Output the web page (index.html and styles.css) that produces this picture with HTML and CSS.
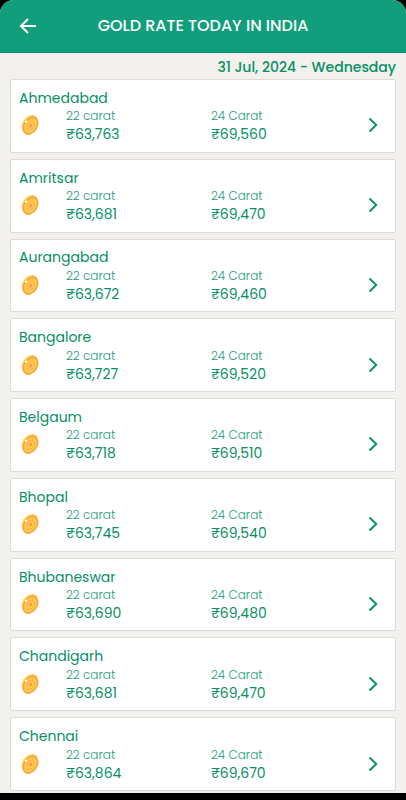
FILE: index.html
```html
<!DOCTYPE html>
<html lang="en">
<head>
<meta charset="utf-8">
<meta name="viewport" content="width=device-width, initial-scale=1">
<title>Gold Rate Today in India</title>
<link rel="stylesheet" href="styles.css">
</head>
<body>
<svg class="sprite" aria-hidden="true">
  <symbol id="coin" viewBox="0 0 20 22">
    <g transform="rotate(32 10 11)">
      <ellipse cx="9.300" cy="10.600" rx="7" ry="10" fill="#fec95a"/>
      <ellipse cx="10.900" cy="11.300" rx="7" ry="10" fill="#f9a536"/>
      <ellipse cx="10.800" cy="11.300" rx="5.500" ry="8.300" fill="#fec95a"/>
      <ellipse cx="10.900" cy="11.300" rx="3.300" ry="5" fill="none" stroke="#fbb040" stroke-width="1"/>
      <path d="M10.900 9.300v4M9.500 11.300h2.800" stroke="#f59a2c" stroke-width="1.500"/>
    </g>
    <circle cx="6" cy="7.600" r="1.200" fill="#fffaf0"/>
  </symbol>
  <symbol id="chevron" viewBox="0 0 10 16">
    <path d="M1.500 1.500 8.300 8l-6.800 6.500" fill="none" stroke="currentColor" stroke-width="1.800"/>
  </symbol>
</svg>
<div class="screen">
  <header class="bar">
    <button class="back" type="button" aria-label="Back">
      <svg viewBox="0 0 18 16" aria-hidden="true"><path d="M17 8H2M9 1 2 8l7 7" fill="none" stroke="currentColor" stroke-width="2"/></svg>
    </button>
    <h1 class="title">GOLD RATE TODAY IN INDIA</h1>
  </header>
  <main class="content">
    <p class="date">31 Jul, 2024 - Wednesday</p>
    <ul class="cities" id="cities"></ul>
  </main>
</div>
<script src="rates.js"></script>
</body>
</html>
```

FILE: styles.css
```css
* {
  box-sizing: border-box;
}

body {
  margin: 0;
  background: #000;
  color: #078f66;
  font-family: Poppins, Inter, sans-serif;
}

.sprite {
  display: none;
}

.screen {
  display: flex;
  flex-direction: column;
  min-height: 100vh;
  border-bottom: 7px solid #000;
  border-radius: 14px 14px 0 0;
  background: #f2f1ed;
  overflow: hidden;
}

.bar {
  display: grid;
  grid-template-columns: 56px 1fr 56px;
  align-items: center;
  height: 53px;
  border-bottom: 1px solid #078f6b;
  background: #109e7c;
  color: #fff;
}

.back {
  display: flex;
  align-items: center;
  justify-content: center;
  height: 48px;
  padding: 0;
  border: 0;
  background: none;
  color: inherit;
}

.back svg {
  width: 18px;
  height: 16px;
}

.title {
  margin: 0;
  font-size: 16px;
  font-weight: 500;
  line-height: 24px;
  text-align: center;
  white-space: nowrap;
}

.content {
  display: flex;
  flex: 1;
  flex-direction: column;
  padding: 2px 10px;
}

.date {
  margin: 0;
  font-size: 14px;
  font-weight: 500;
  line-height: 24px;
  text-align: right;
}

.cities {
  display: grid;
  flex: 1;
  grid-auto-rows: 1fr;
  gap: 6px;
  margin: 0;
  padding: 0;
  list-style: none;
}

.card {
  display: grid;
  grid-template-columns: 47px 12fr 13fr 10px;
  grid-template-rows: 19px 36px;
  align-content: center;
  align-items: center;
  height: 100%;
  padding: 0 17px 0 8px;
  border: 1px solid #dddcd8;
  border-radius: 2px;
  background: #fff;
  color: inherit;
  text-decoration: none;
}

.name {
  grid-column: 1 / -1;
  font-size: 14px;
  line-height: 18px;
}

.coin {
  width: 22px;
  height: 22px;
}

.rate {
  display: flex;
  flex-direction: column;
  line-height: 18px;
}

.carat {
  color: #259b78;
  font-size: 12px;
  font-weight: 300;
}

.price {
  font-size: 14px;
}

.chevron {
  width: 10px;
  height: 16px;
}
```

FILE: rates.js
```js
const rates = [
  ["Ahmedabad", "63,763", "69,560"],
  ["Amritsar", "63,681", "69,470"],
  ["Aurangabad", "63,672", "69,460"],
  ["Bangalore", "63,727", "69,520"],
  ["Belgaum", "63,718", "69,510"],
  ["Bhopal", "63,745", "69,540"],
  ["Bhubaneswar", "63,690", "69,480"],
  ["Chandigarh", "63,681", "69,470"],
  ["Chennai", "63,864", "69,670"]
];

document.getElementById("cities").innerHTML = rates.map(([city, r22, r24]) => `
  <li>
    <a class="card" href="#${city.toLowerCase()}">
      <span class="name">${city}</span>
      <svg class="coin" aria-hidden="true"><use href="#coin"/></svg>
      <span class="rate"><span class="carat">22 carat</span><span class="price">₹${r22}</span></span>
      <span class="rate"><span class="carat">24 Carat</span><span class="price">₹${r24}</span></span>
      <svg class="chevron" aria-hidden="true"><use href="#chevron"/></svg>
    </a>
  </li>`).join("");
```
